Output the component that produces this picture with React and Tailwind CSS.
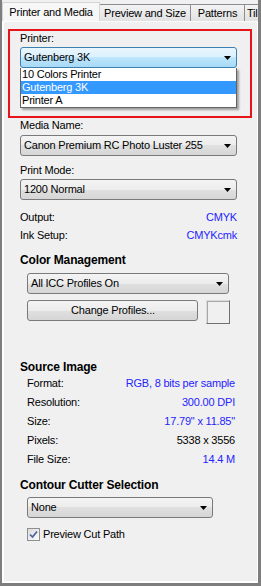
import React from 'react';

const font = { fontFamily: '"Liberation Sans", Arial, sans-serif' };

const Arrow = () => (
  <svg width="7" height="4" viewBox="0 0 7 4" className="shrink-0">
    <path d="M0 0 H7 L3.5 4 Z" fill="#000" />
  </svg>
);

const Combo = ({ value, width, hot = false }) => (
  <div
    className={
      'flex h-[21px] shrink-0 items-center justify-between whitespace-nowrap rounded-[3px] border pl-[3px] pr-[5px] ' +
      (hot
        ? 'border-[#3c7fb1] bg-[linear-gradient(#eaf6fd_0%,#d9f0fc_50%,#bee6fd_50%,#a7d9f5_100%)]'
        : 'border-[#7a7a7a] bg-[linear-gradient(#f4f4f4_0%,#ececec_50%,#e0e0e0_50%,#d6d6d6_100%)]')
    }
    style={{ width }}
  >
    <span>{value}</span>
    <Arrow />
  </div>
);

const Label = ({ children, bold = false }) => (
  <div
    className={
      'flex h-[15px] shrink-0 items-center whitespace-nowrap ' +
      (bold ? 'text-[12px] font-bold tracking-[-0.15px]' : '')
    }
  >
    {children}
  </div>
);

const Row = ({ label, value, blue = true, h = 'h-[19px]' }) => (
  <div className={'flex shrink-0 items-center justify-between whitespace-nowrap ' + h}>
    <span>{label}</span>
    <span className={blue ? 'text-[#2424ff]' : 'text-black'}>{value}</span>
  </div>
);

const tabIdle =
  'flex h-[17px] shrink-0 items-center whitespace-nowrap border border-b-0 border-l-0 border-[#8c8e94] bg-[linear-gradient(#f3f3f3,#e2e2e2)]';

export default function App() {
  return (
    <div
      className="h-[586px] w-[261px] overflow-hidden bg-[#f0f0f0] text-[11px] tracking-[-0.2px] text-black"
      style={font}
    >
      <div className="flex h-full flex-col border-b-[3px] border-l-2 border-r-[3px] border-[#7e7e7e]">
        {/* tab strip */}
        <div className="flex h-[21px] shrink-0 items-end overflow-hidden">
          <div className="z-10 -mb-px flex h-[20px] w-[98px] shrink-0 items-center justify-center whitespace-nowrap border border-b-0 border-[#d4d4d4] bg-[#f7f7f7] pb-[1px]">
            Printer and Media
          </div>
          <div className={tabIdle + ' w-[91px] justify-center'}>Preview and Size</div>
          <div className={tabIdle + ' w-[54px] justify-center'}>Patterns</div>
          <div className={tabIdle + ' w-[40px] pl-[2px]'}>Tiling</div>
        </div>

        {/* panel */}
        <div className="flex flex-1 flex-col border-b-2 border-l-2 border-r border-t border-white border-t-[#fbfbfb]">
          {/* printer, highlighted */}
          <div className="ml-[4px] mt-[7px] flex h-[89px] w-[244px] shrink-0 flex-col border-2 border-[#e8141c] pl-[10px]">
            <Label>Printer:</Label>
            <div className="mt-[1px]">
              <Combo value="Gutenberg 3K" width={217} hot />
              <div className="w-[217px] border border-t-0 border-[#646464] bg-white shadow-[2px_2px_2px_rgba(0,0,0,0.35)]">
                <div className="flex h-[13px] items-center pl-[1px]">10 Colors Printer</div>
                <div className="flex h-[13px] items-center bg-[#3399ff] pl-[1px] text-white">Gutenberg 3K</div>
                <div className="flex h-[13px] items-center pl-[1px]">Printer A</div>
              </div>
            </div>
          </div>

          <div className="flex flex-col pl-[16px]">
            <Label>Media Name:</Label>
            <div className="mt-[2px]">
              <Combo value="Canon Premium RC Photo Luster 255" width={217} />
            </div>
            <div className="mt-[7px]">
              <Label>Print Mode:</Label>
            </div>
            <div className="mt-[1px]">
              <Combo value="1200 Normal" width={217} />
            </div>
            <div className="mt-[8px] flex w-[217px] flex-col">
              <Row label="Output:" value="CMYK" h="h-[18px]" />
              <Row label="Ink Setup:" value="CMYKcmk" h="h-[18px]" />
            </div>

            <div className="mt-[8px]">
              <Label bold>Color Management</Label>
            </div>
            <div className="mt-[6px] flex flex-col gap-[6px] pl-[7px]">
              <Combo value="All ICC Profiles On" width={202} />
              <div className="flex items-start gap-[8px]">
                <button className="flex h-[21px] w-[171px] items-center justify-center rounded-[3px] border border-[#7a7a7a] bg-[linear-gradient(#f4f4f4_0%,#ececec_50%,#e0e0e0_50%,#d6d6d6_100%)] pl-[1px] tracking-[-0.2px]">
                  Change Profiles...
                </button>
                <div className="h-[24px] w-[24px] border border-b-[#707070] border-l-[#dadada] border-r-[#707070] border-t-[#dadada] bg-[#f0f0f0] shadow-[inset_1px_1px_0_#a8a8a8]" />
              </div>
            </div>

            <div className="mt-[35px]">
              <Label bold>Source Image</Label>
            </div>
            <div className="flex w-[215px] flex-col pl-[7px]">
              <Row label="Format:" value="RGB, 8 bits per sample" />
              <Row label="Resolution:" value="300.00 DPI" />
              <Row label="Size:" value={'17.79" x 11.85"'} />
              <Row label="Pixels:" value="5338 x 3556" blue={false} />
              <Row label="File Size:" value="14.4 M" />
            </div>

            <div className="mt-[8px]">
              <Label bold>Contour Cutter Selection</Label>
            </div>
            <div className="mt-[5px] flex flex-col gap-[10px] pl-[7px]">
              <Combo value="None" width={186} />
              <label className="flex h-[13px] items-center gap-[3px]">
                <span className="flex h-[13px] w-[13px] shrink-0 items-center justify-center border border-[#8e8f8f] bg-[linear-gradient(135deg,#dcdcdc,#fbfbfb)]">
                  <svg width="9" height="9" viewBox="0 0 9 9">
                    <path d="M1 4.5 L3.5 7 L8 1.5" fill="none" stroke="#4b61a0" strokeWidth="1.7" />
                  </svg>
                </span>
                <span className="whitespace-nowrap">Preview Cut Path</span>
              </label>
            </div>
          </div>
        </div>
      </div>
    </div>
  );
}
